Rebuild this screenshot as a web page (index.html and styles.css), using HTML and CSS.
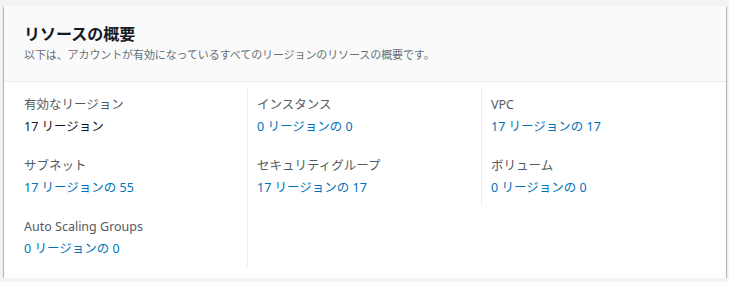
FILE: index.html
```html
<!DOCTYPE html>
<html lang="ja">
<head>
    <meta charset="UTF-8">
    <meta name="viewport" content="width=device-width, initial-scale=1.0">
    <title>リソースの概要</title>
    <link rel="stylesheet" href="styles.css">
</head>
<body>
    <!-- Resource summary card -->
    <div class="card">
        <div class="card-header">
            <h2 class="card-title">リソースの概要</h2>
            <p class="card-desc">以下は、アカウントが有効になっているすべてのリージョンのリソースの概要です。</p>
        </div>

        <div class="card-body">
            <div class="column">
                <div class="item">
                    <div class="label">有効なリージョン</div>
                    <div class="value plain">17 リージョン</div>
                </div>
                <div class="item">
                    <div class="label">サブネット</div>
                    <a class="value" href="#">17 リージョンの 55</a>
                </div>
                <div class="item">
                    <div class="label">Auto Scaling Groups</div>
                    <a class="value" href="#">0 リージョンの 0</a>
                </div>
            </div>

            <div class="column">
                <div class="item">
                    <div class="label">インスタンス</div>
                    <a class="value" href="#">0 リージョンの 0</a>
                </div>
                <div class="item">
                    <div class="label">セキュリティグループ</div>
                    <a class="value" href="#">17 リージョンの 17</a>
                </div>
            </div>

            <div class="column">
                <div class="item">
                    <div class="label">VPC</div>
                    <a class="value" href="#">17 リージョンの 17</a>
                </div>
                <div class="item">
                    <div class="label">ボリューム</div>
                    <a class="value" href="#">0 リージョンの 0</a>
                </div>
            </div>
        </div>
    </div>
</body>
</html>
```

FILE: styles.css
```css
/* Page */
body {
    margin: 0;
    font-family: "Noto Sans", "Noto Sans CJK JP", sans-serif;
    background-color: #f2f3f3;
    color: #16191f;
}

/* Card container */
.card {
    margin: 6px 3px 0 4px;
    background-color: #ffffff;
    box-shadow: 0 1px 1px 0 rgba(0, 28, 36, 0.5),
                1px 1px 1px 0 rgba(0, 28, 36, 0.2),
                -1px 1px 1px 0 rgba(0, 28, 36, 0.2);
}

/* Header with title and description */
.card-header {
    background-color: #fafafa;
    border-bottom: 1px solid #eaeded;
    padding: 16px 20px 17px 20px;
}

.card-title {
    margin: 0;
    font-size: 16px;
    font-weight: bold;
    line-height: 24px;
    color: #16191f;
}

.card-desc {
    margin: 0;
    font-size: 11px;
    letter-spacing: -0.1px;
    line-height: 18px;
    color: #687078;
}

/* Three column layout, divider sits on the right of a column */
.card-body {
    display: grid;
    grid-template-columns: 224px 234px 1fr;
    align-items: start;
    padding: 5px 20px 11px 20px;
}

.column {
    padding: 6px 0 7px 0;
    display: flex;
    flex-direction: column;
    gap: 16px;
}

.column:not(:last-child) {
    border-right: 1px solid #eaeded;
}

.column + .column {
    padding-left: 9px;
}

/* Key / value pairs */
.label {
    font-size: 12.5px;
    line-height: 23px;
    color: #545b64;
}

.value {
    display: block;
    font-size: 12.5px;
    line-height: 22px;
    color: #0073bb;
    text-decoration: none;
}

.value.plain {
    color: #16191f;
}
```
